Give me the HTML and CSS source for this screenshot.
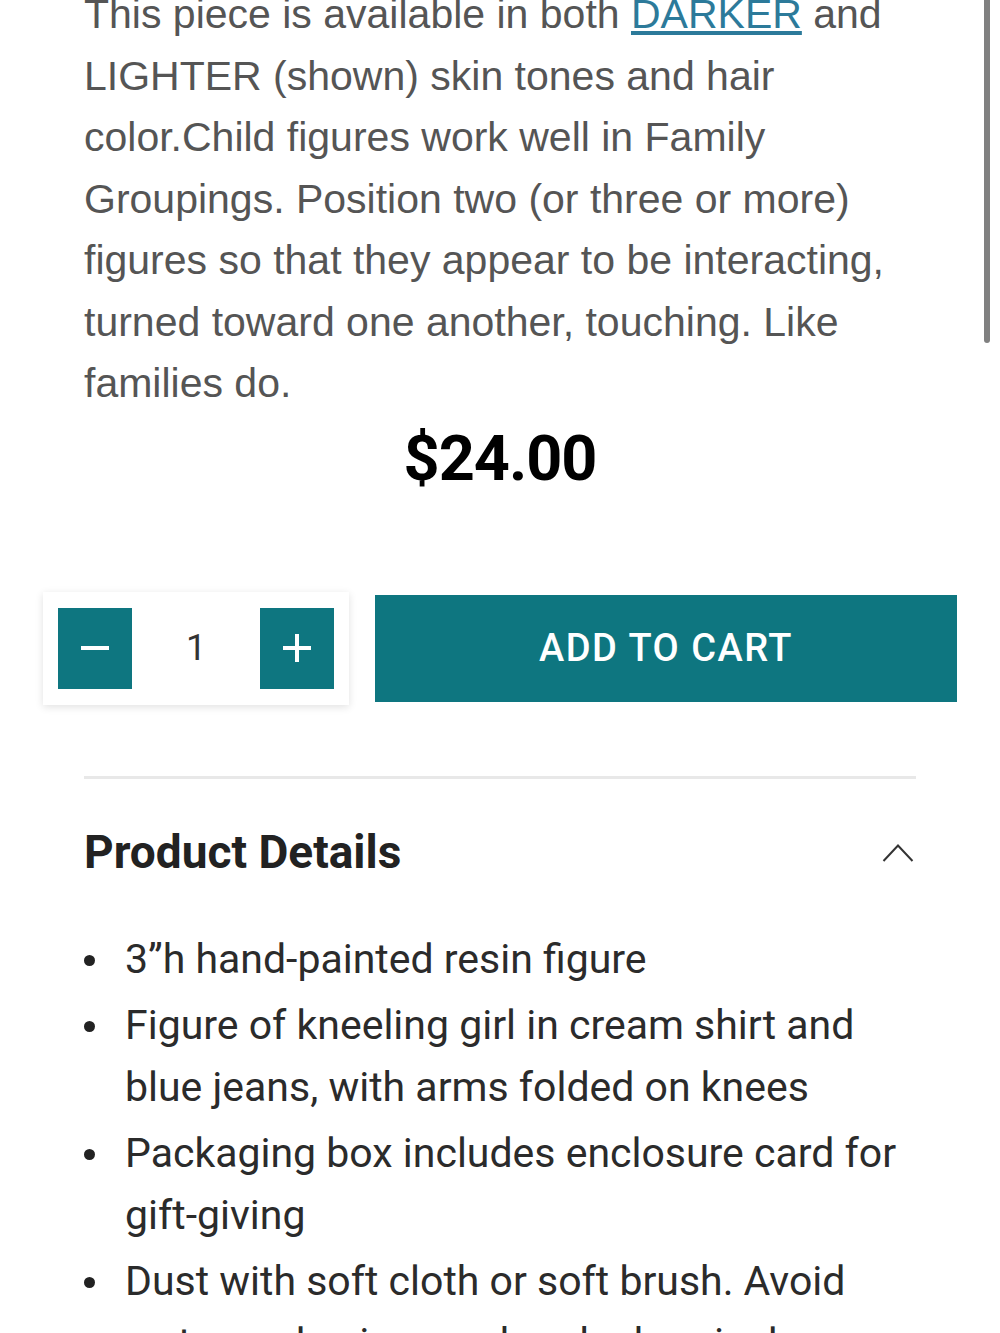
FILE: index.html
```html
<!DOCTYPE html>
<html lang="en">

<head>
	<meta charset="UTF-8">
	<title>Kneeling Girl Figure</title>
	<link rel="stylesheet" href="styles.css">
</head>

<body>
	<div class="scroll-thumb"></div>

	<div class="product">
		<p class="description">This piece is available in both <a href="#">DARKER</a> and LIGHTER (shown) skin tones and hair color.Child figures work well in Family Groupings. Position two (or three or more) figures so that they appear to be interacting, turned toward one another, touching. Like families do.</p>

		<div class="price">$24.00</div>

		<div class="buy-row">
			<div class="qty">
				<button class="qty-btn" type="button" aria-label="Decrease">
					<svg width="30" height="30" viewBox="0 0 30 30"><path d="M1 15h28" stroke="#fff" stroke-width="4"/></svg>
				</button>
				<span class="qty-value">1</span>
				<button class="qty-btn" type="button" aria-label="Increase">
					<svg width="30" height="30" viewBox="0 0 30 30"><path d="M1 15h28M15 1v28" stroke="#fff" stroke-width="4"/></svg>
				</button>
			</div>
			<button class="add-to-cart" type="button">ADD TO CART</button>
		</div>

		<div class="details">
			<div class="details-head">
				<h2>Product Details</h2>
				<svg class="chevron" width="32" height="20" viewBox="0 0 32 20"><path d="M1.5 19L16 3.5 30.5 19" fill="none" stroke="#333" stroke-width="2"/></svg>
			</div>
			<ul class="details-list">
				<li>3”h hand-painted resin figure</li>
				<li>Figure of kneeling girl in cream shirt and blue jeans, with arms folded on knees</li>
				<li>Packaging box includes enclosure card for gift-giving</li>
				<li>Dust with soft cloth or soft brush. Avoid water and using any harsh chemicals</li>
			</ul>
		</div>
	</div>
</body>

</html>
```

FILE: styles.css
```css
body {
	margin: 0;
	background-color: #fff;
	font-family: Roboto, "Liberation Sans", sans-serif;
	overflow: hidden;
}

.scroll-thumb {
	position: fixed;
	top: -10px;
	right: 10px;
	width: 6px;
	height: 353px;
	border-radius: 3px;
	background-color: #808080;
}

.product {
	padding: 0 84px;
}

.description {
	margin: -16px 0 0;
	font-family: "Liberation Sans", Arial, sans-serif;
	font-size: 41px;
	line-height: 61.5px;
	color: #555;
}

.description a {
	color: #2c7a9a;
	text-decoration: underline;
	text-underline-offset: 3px;
}

.price {
	margin-top: 8px;
	text-align: center;
	font-size: 63px;
	font-weight: 700;
	line-height: 72px;
	color: #000;
	letter-spacing: -1px;
}

.buy-row {
	display: flex;
	align-items: center;
	gap: 26px;
	margin: 97px -41px 0;
}

.qty {
	display: flex;
	align-items: center;
	justify-content: space-between;
	width: 306px;
	height: 113px;
	padding: 0 15px;
	box-sizing: border-box;
	background-color: #fff;
	box-shadow: 0 2px 8px rgba(0, 0, 0, 0.12);
}

.qty-btn {
	display: flex;
	align-items: center;
	justify-content: center;
	width: 74px;
	height: 81px;
	padding: 0;
	border: none;
	background-color: #0e7680;
}

.qty-value {
	font-size: 36px;
	color: #333;
}

.add-to-cart {
	flex: 1;
	height: 107px;
	border: none;
	background-color: #0e7680;
	color: #fff;
	font-family: Roboto, sans-serif;
	font-size: 38px;
	font-weight: 500;
	letter-spacing: 1.5px;
}

.details {
	margin-top: 71px;
	border-top: 3px solid #e8e8e8;
}

.details-head {
	display: flex;
	align-items: center;
	justify-content: space-between;
	padding-top: 43px;
}

.details-head h2 {
	margin: 0;
	font-size: 46px;
	font-weight: 700;
	line-height: 60px;
	color: #222;
}

.chevron {
	margin-right: 2px;
}

.details-list {
	margin: 46px 0 0;
	padding: 0;
	list-style: none;
	font-size: 41px;
	line-height: 62px;
	color: #2b2b2b;
}

.details-list li {
	display: flex;
	gap: 30px;
	margin-bottom: 4px;
}

.details-list li::before {
	content: "";
	flex: none;
	width: 11px;
	height: 11px;
	margin-top: 27px;
	border-radius: 50%;
	background-color: #222;
}
```
